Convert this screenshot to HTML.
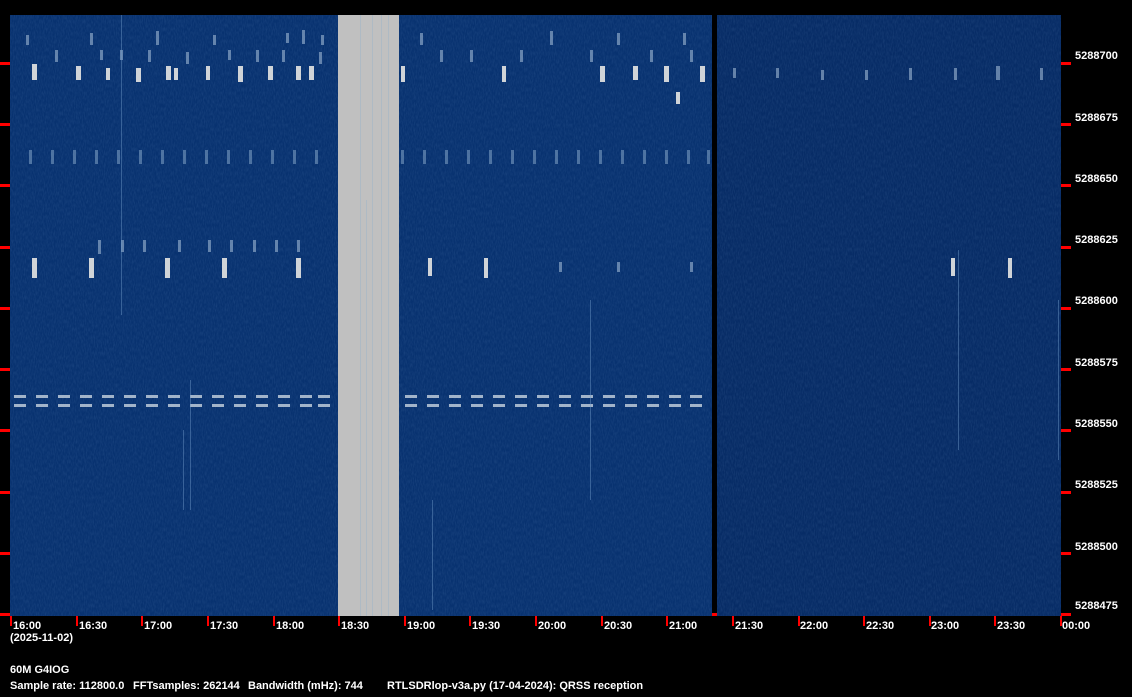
<!DOCTYPE html>
<html><head><meta charset="utf-8"><style>
html,body{margin:0;padding:0;background:#000;}
body{width:1132px;height:697px;position:relative;overflow:hidden;font-family:"Liberation Sans",sans-serif;font-weight:bold;font-size:11px;color:#fff;}
.t{position:absolute;white-space:nowrap;line-height:12px;}
</style></head><body>
<svg width="1132" height="697" style="position:absolute;left:0;top:0">
<defs>
<filter id="n" x="0" y="0" width="100%" height="100%">
<feTurbulence type="fractalNoise" baseFrequency="0.9 0.25" numOctaves="2" seed="3"/>
<feColorMatrix values="0 0 0 0 0.3  0 0 0 0 0.5  0 0 0 0 0.8  0 0 0 0.9 -0.3"/>
</filter>
</defs>
<rect x="10" y="15" width="702" height="601" fill="#083270"/>
<rect x="717" y="15" width="344" height="601" fill="#072c66"/>
<rect x="10" y="15" width="1051" height="601" filter="url(#n)" opacity="0.22"/>
<rect x="712" y="15" width="5" height="601" fill="#000"/>
<rect x="338" y="15" width="61" height="601" fill="#c0c0c0"/>
<g fill="#8fb0cc" opacity="0.35">
<rect x="360" y="15" width="1" height="601"/><rect x="372" y="15" width="1" height="601"/><rect x="381" y="15" width="1" height="601"/><rect x="388" y="15" width="1" height="601"/><rect x="366" y="200" width="1" height="416"/>
</g>
<g fill="#d0d4d8">
<rect x="32" y="64" width="5" height="16"/><rect x="76" y="66" width="5" height="14"/><rect x="106" y="68" width="4" height="12"/><rect x="136" y="68" width="5" height="14"/><rect x="166" y="66" width="5" height="14"/><rect x="174" y="68" width="4" height="12"/><rect x="206" y="66" width="4" height="14"/><rect x="238" y="66" width="5" height="16"/><rect x="268" y="66" width="5" height="14"/><rect x="296" y="66" width="5" height="14"/><rect x="309" y="66" width="5" height="14"/>
<rect x="401" y="66" width="4" height="16"/><rect x="502" y="66" width="4" height="16"/><rect x="600" y="66" width="5" height="16"/><rect x="633" y="66" width="5" height="14"/><rect x="664" y="66" width="5" height="16"/><rect x="700" y="66" width="5" height="16"/><rect x="676" y="92" width="4" height="12"/>
<rect x="32" y="258" width="5" height="20"/><rect x="89" y="258" width="5" height="20"/><rect x="165" y="258" width="5" height="20"/><rect x="222" y="258" width="5" height="20"/><rect x="296" y="258" width="5" height="20"/><rect x="428" y="258" width="4" height="18"/><rect x="484" y="258" width="4" height="20"/><rect x="951" y="258" width="4" height="18"/><rect x="1008" y="258" width="4" height="20"/>
</g>
<g fill="#9fb8d4" opacity="0.6">
<rect x="26" y="35" width="3" height="10"/><rect x="90" y="33" width="3" height="12"/><rect x="156" y="31" width="3" height="14"/><rect x="213" y="35" width="3" height="10"/><rect x="286" y="33" width="3" height="10"/><rect x="302" y="30" width="3" height="14"/><rect x="321" y="35" width="3" height="10"/>
<rect x="420" y="33" width="3" height="12"/><rect x="550" y="31" width="3" height="14"/><rect x="617" y="33" width="3" height="12"/><rect x="683" y="33" width="3" height="12"/>
<rect x="55" y="50" width="3" height="12"/><rect x="100" y="50" width="3" height="10"/><rect x="120" y="50" width="3" height="10"/><rect x="148" y="50" width="3" height="12"/><rect x="186" y="52" width="3" height="12"/><rect x="228" y="50" width="3" height="10"/><rect x="256" y="50" width="3" height="12"/><rect x="282" y="50" width="3" height="12"/><rect x="319" y="52" width="3" height="12"/>
<rect x="440" y="50" width="3" height="12"/><rect x="470" y="50" width="3" height="12"/><rect x="520" y="50" width="3" height="12"/><rect x="590" y="50" width="3" height="12"/><rect x="650" y="50" width="3" height="12"/><rect x="690" y="50" width="3" height="12"/>
<rect x="733" y="68" width="3" height="10"/><rect x="776" y="68" width="3" height="10"/><rect x="821" y="70" width="3" height="10"/><rect x="865" y="70" width="3" height="10"/><rect x="909" y="68" width="3" height="12"/><rect x="954" y="68" width="3" height="12"/><rect x="996" y="66" width="4" height="14"/><rect x="1040" y="68" width="3" height="12"/>
<rect x="98" y="240" width="3" height="14"/><rect x="121" y="240" width="3" height="12"/><rect x="143" y="240" width="3" height="12"/><rect x="178" y="240" width="3" height="12"/><rect x="208" y="240" width="3" height="12"/><rect x="230" y="240" width="3" height="12"/><rect x="253" y="240" width="3" height="12"/><rect x="275" y="240" width="3" height="12"/><rect x="297" y="240" width="3" height="12"/>
<rect x="559" y="262" width="3" height="10"/><rect x="617" y="262" width="3" height="10"/><rect x="690" y="262" width="3" height="10"/>
</g>
<g fill="#8fb0d0" opacity="0.5">
<rect x="29" y="150" width="3" height="14"/><rect x="51" y="150" width="3" height="14"/><rect x="73" y="150" width="3" height="14"/><rect x="95" y="150" width="3" height="14"/><rect x="117" y="150" width="3" height="14"/><rect x="139" y="150" width="3" height="14"/><rect x="161" y="150" width="3" height="14"/><rect x="183" y="150" width="3" height="14"/><rect x="205" y="150" width="3" height="14"/><rect x="227" y="150" width="3" height="14"/><rect x="249" y="150" width="3" height="14"/><rect x="271" y="150" width="3" height="14"/><rect x="293" y="150" width="3" height="14"/><rect x="315" y="150" width="3" height="14"/>
<rect x="401" y="150" width="3" height="14"/><rect x="423" y="150" width="3" height="14"/><rect x="445" y="150" width="3" height="14"/><rect x="467" y="150" width="3" height="14"/><rect x="489" y="150" width="3" height="14"/><rect x="511" y="150" width="3" height="14"/><rect x="533" y="150" width="3" height="14"/><rect x="555" y="150" width="3" height="14"/><rect x="577" y="150" width="3" height="14"/><rect x="599" y="150" width="3" height="14"/><rect x="621" y="150" width="3" height="14"/><rect x="643" y="150" width="3" height="14"/><rect x="665" y="150" width="3" height="14"/><rect x="687" y="150" width="3" height="14"/><rect x="707" y="150" width="3" height="14"/>
</g>
<g fill="#c8d4e0" opacity="0.8">
<rect x="14" y="395" width="12" height="3"/><rect x="14" y="404" width="12" height="3"/>
<rect x="36" y="395" width="12" height="3"/><rect x="36" y="404" width="12" height="3"/>
<rect x="58" y="395" width="12" height="3"/><rect x="58" y="404" width="12" height="3"/>
<rect x="80" y="395" width="12" height="3"/><rect x="80" y="404" width="12" height="3"/>
<rect x="102" y="395" width="12" height="3"/><rect x="102" y="404" width="12" height="3"/>
<rect x="124" y="395" width="12" height="3"/><rect x="124" y="404" width="12" height="3"/>
<rect x="146" y="395" width="12" height="3"/><rect x="146" y="404" width="12" height="3"/>
<rect x="168" y="395" width="12" height="3"/><rect x="168" y="404" width="12" height="3"/>
<rect x="190" y="395" width="12" height="3"/><rect x="190" y="404" width="12" height="3"/>
<rect x="212" y="395" width="12" height="3"/><rect x="212" y="404" width="12" height="3"/>
<rect x="234" y="395" width="12" height="3"/><rect x="234" y="404" width="12" height="3"/>
<rect x="256" y="395" width="12" height="3"/><rect x="256" y="404" width="12" height="3"/>
<rect x="278" y="395" width="12" height="3"/><rect x="278" y="404" width="12" height="3"/>
<rect x="300" y="395" width="12" height="3"/><rect x="300" y="404" width="12" height="3"/>
<rect x="318" y="395" width="12" height="3"/><rect x="318" y="404" width="12" height="3"/>
<rect x="405" y="395" width="12" height="3"/><rect x="405" y="404" width="12" height="3"/>
<rect x="427" y="395" width="12" height="3"/><rect x="427" y="404" width="12" height="3"/>
<rect x="449" y="395" width="12" height="3"/><rect x="449" y="404" width="12" height="3"/>
<rect x="471" y="395" width="12" height="3"/><rect x="471" y="404" width="12" height="3"/>
<rect x="493" y="395" width="12" height="3"/><rect x="493" y="404" width="12" height="3"/>
<rect x="515" y="395" width="12" height="3"/><rect x="515" y="404" width="12" height="3"/>
<rect x="537" y="395" width="12" height="3"/><rect x="537" y="404" width="12" height="3"/>
<rect x="559" y="395" width="12" height="3"/><rect x="559" y="404" width="12" height="3"/>
<rect x="581" y="395" width="12" height="3"/><rect x="581" y="404" width="12" height="3"/>
<rect x="603" y="395" width="12" height="3"/><rect x="603" y="404" width="12" height="3"/>
<rect x="625" y="395" width="12" height="3"/><rect x="625" y="404" width="12" height="3"/>
<rect x="647" y="395" width="12" height="3"/><rect x="647" y="404" width="12" height="3"/>
<rect x="669" y="395" width="12" height="3"/><rect x="669" y="404" width="12" height="3"/>
<rect x="690" y="395" width="12" height="3"/><rect x="690" y="404" width="12" height="3"/>
</g>
<g fill="#6f98c8" opacity="0.45">
<rect x="190" y="380" width="1" height="130"/><rect x="121" y="15" width="1" height="300"/><rect x="183" y="430" width="1" height="80"/><rect x="958" y="250" width="1" height="200"/><rect x="1058" y="300" width="1" height="160"/><rect x="432" y="500" width="1" height="110"/><rect x="590" y="300" width="1" height="200"/>
</g>
<g fill="#f00">
<rect x="1061" y="62" width="10" height="3"/><rect x="1061" y="123" width="10" height="3"/><rect x="1061" y="184" width="10" height="3"/><rect x="1061" y="246" width="10" height="3"/><rect x="1061" y="307" width="10" height="3"/><rect x="1061" y="368" width="10" height="3"/><rect x="1061" y="429" width="10" height="3"/><rect x="1061" y="491" width="10" height="3"/><rect x="1061" y="552" width="10" height="3"/><rect x="1061" y="613" width="10" height="3"/>
<rect x="0" y="62" width="10" height="3"/><rect x="0" y="123" width="10" height="3"/><rect x="0" y="184" width="10" height="3"/><rect x="0" y="246" width="10" height="3"/><rect x="0" y="307" width="10" height="3"/><rect x="0" y="368" width="10" height="3"/><rect x="0" y="429" width="10" height="3"/><rect x="0" y="491" width="10" height="3"/><rect x="0" y="552" width="10" height="3"/><rect x="0" y="613" width="10" height="3"/>
<rect x="712" y="613" width="5" height="3"/>
<rect x="10" y="616" width="2" height="10"/><rect x="76" y="616" width="2" height="10"/><rect x="141" y="616" width="2" height="10"/><rect x="207" y="616" width="2" height="10"/><rect x="273" y="616" width="2" height="10"/><rect x="338" y="616" width="2" height="10"/><rect x="404" y="616" width="2" height="10"/><rect x="469" y="616" width="2" height="10"/><rect x="535" y="616" width="2" height="10"/><rect x="601" y="616" width="2" height="10"/><rect x="666" y="616" width="2" height="10"/><rect x="732" y="616" width="2" height="10"/><rect x="798" y="616" width="2" height="10"/><rect x="863" y="616" width="2" height="10"/><rect x="929" y="616" width="2" height="10"/><rect x="994" y="616" width="2" height="10"/><rect x="1060" y="616" width="2" height="10"/>
</g>
</svg>
<div class="t" style="left:1075px;top:50px">5288700</div>
<div class="t" style="left:1075px;top:112px">5288675</div>
<div class="t" style="left:1075px;top:173px">5288650</div>
<div class="t" style="left:1075px;top:234px">5288625</div>
<div class="t" style="left:1075px;top:295px">5288600</div>
<div class="t" style="left:1075px;top:357px">5288575</div>
<div class="t" style="left:1075px;top:418px">5288550</div>
<div class="t" style="left:1075px;top:479px">5288525</div>
<div class="t" style="left:1075px;top:541px">5288500</div>
<div class="t" style="left:1075px;top:600px">5288475</div>
<div class="t" style="left:13px;top:620px">16:00</div>
<div class="t" style="left:79px;top:620px">16:30</div>
<div class="t" style="left:144px;top:620px">17:00</div>
<div class="t" style="left:210px;top:620px">17:30</div>
<div class="t" style="left:276px;top:620px">18:00</div>
<div class="t" style="left:341px;top:620px">18:30</div>
<div class="t" style="left:407px;top:620px">19:00</div>
<div class="t" style="left:472px;top:620px">19:30</div>
<div class="t" style="left:538px;top:620px">20:00</div>
<div class="t" style="left:604px;top:620px">20:30</div>
<div class="t" style="left:669px;top:620px">21:00</div>
<div class="t" style="left:735px;top:620px">21:30</div>
<div class="t" style="left:800px;top:620px">22:00</div>
<div class="t" style="left:866px;top:620px">22:30</div>
<div class="t" style="left:931px;top:620px">23:00</div>
<div class="t" style="left:997px;top:620px">23:30</div>
<div class="t" style="left:1062px;top:620px">00:00</div>
<div class="t" style="left:10px;top:632px">(2025-11-02)</div>
<div class="t" style="left:10px;top:664px">60M G4IOG</div>
<div class="t" style="left:10px;top:680px">Sample rate: 112800.0</div>
<div class="t" style="left:133px;top:680px">FFTsamples: 262144</div>
<div class="t" style="left:248px;top:680px">Bandwidth (mHz): 744</div>
<div class="t" style="left:387px;top:680px">RTLSDRlop-v3a.py (17-04-2024): QRSS reception</div>
</body></html>
